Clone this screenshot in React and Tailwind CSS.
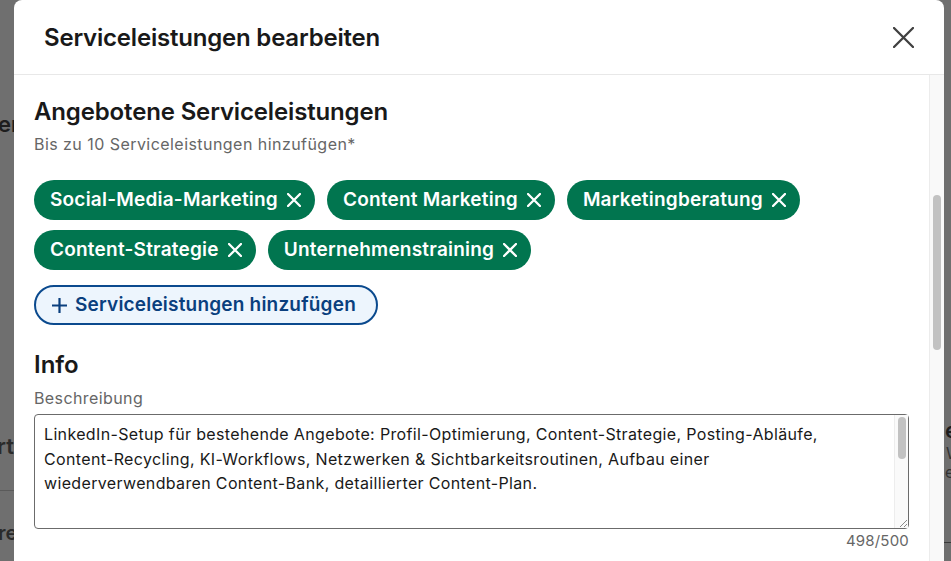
const services = [
  "Social-Media-Marketing",
  "Content Marketing",
  "Marketingberatung",
  "Content-Strategie",
  "Unternehmenstraining",
];

const beschreibung = [
  "LinkedIn-Setup für bestehende Angebote: Profil-Optimierung, Content-Strategie, Posting-Abläufe,",
  "Content-Recycling, KI-Workflows, Netzwerken & Sichtbarkeitsroutinen, Aufbau einer",
  "wiederverwendbaren Content-Bank, detaillierter Content-Plan.",
];

function Cross({ size, stroke, color }) {
  return (
    <svg width={size} height={size} viewBox={`0 0 ${size} ${size}`} fill="none">
      <path
        d={`M1 1 L${size - 1} ${size - 1} M${size - 1} 1 L1 ${size - 1}`}
        stroke={color}
        strokeWidth={stroke}
        strokeLinecap="round"
      />
    </svg>
  );
}

function ServicePill({ label }) {
  return (
    <button className="flex h-10 items-center gap-[9px] rounded-full bg-[#01754f] pl-[16px] pr-[14px] text-[19px] font-semibold tracking-[0.22px] text-white">
      <span>{label}</span>
      <Cross size={14} stroke={2.3} color="#ffffff" />
    </button>
  );
}

function PageBehind() {
  // dimmed page behind the modal, only its edges peek out
  return (
    <div className="flex h-[561px] w-full justify-between overflow-hidden bg-[#6f6f6f] text-[#1d1d1d]">
      <div className="flex w-[14px] flex-col overflow-hidden">
        <div className="mt-[110px] -ml-[2px] text-[22px] font-semibold leading-[28px]">er</div>
        <div className="mt-[294px] -ml-[3px] text-[22px] font-semibold leading-[28px] text-[#2a2a2a]">rt</div>
        <div className="mt-[30px] border-t border-[#5a5a5a]" />
        <div className="mt-[30px] -ml-[2px] text-[20px] font-semibold leading-[24px] text-[#2a2a2a]">re</div>
      </div>
      <div className="flex w-[7px] flex-col overflow-hidden">
        <div className="mt-[416px] ml-[1px] text-[22px] font-semibold leading-[28px]">el</div>
        <div className="ml-[2px] text-[16px] leading-[18px] text-[#333]">W</div>
        <div className="ml-[1px] text-[16px] leading-[20px] text-[#333]">e</div>
        <div className="mt-[60px] border-t border-[#3a3a3a]" />
      </div>
    </div>
  );
}

export default function App() {
  return (
    <div
      className="relative h-[561px] w-[951px] overflow-hidden"
      style={{ fontFamily: "Inter, 'Liberation Sans', sans-serif" }}
    >
      <PageBehind />

      <div className="absolute left-[14px] top-0 flex h-[600px] w-[930px] flex-col rounded-t-[8px] bg-white">
        <div className="flex h-[75px] shrink-0 items-center justify-between border-b border-[#e8e8e8] pl-[30px] pr-[30px]">
          <h2 className="mt-[2px] text-[24px] font-semibold tracking-[-0.2px] text-[#191919]">
            Serviceleistungen bearbeiten
          </h2>
          <Cross size={21} stroke={2.3} color="#404040" />
        </div>

        <div className="flex flex-1">
          <div className="flex-1 px-[20px] pt-[22px]">
            <h3 className="text-[24px] font-semibold leading-[30px] tracking-[-0.15px] text-[#191919]">
              Angebotene Serviceleistungen
            </h3>
            <p className="mt-[7px] text-[16px] leading-[20px] tracking-[0.45px] text-[#666666]">
              Bis zu 10 Serviceleistungen hinzufügen*
            </p>

            <div className="mt-[26px] flex flex-wrap gap-x-[12px] gap-y-[10px]">
              {services.map((s) => (
                <ServicePill key={s} label={s} />
              ))}
            </div>

            <button className="mt-[15px] flex h-10 items-center gap-[8px] rounded-full border-2 border-[#0b4a8e] bg-[#edf5fd] pl-[16px] pr-[20px] text-[19px] font-semibold tracking-[0.2px] text-[#0a3f7e]">
              <svg width="15" height="15" viewBox="0 0 15 15" fill="none">
                <path d="M7.5 0.5 V14.5 M0.5 7.5 H14.5" stroke="#0a3f7e" strokeWidth="2.2" strokeLinecap="round" />
              </svg>
              <span>Serviceleistungen hinzufügen</span>
            </button>

            <h3 className="mt-[25px] text-[24px] font-semibold leading-[30px] text-[#191919]">
              Info
            </h3>
            <div className="mt-[8px] text-[16px] leading-[20px] tracking-[0.4px] text-[#666666]">Beschreibung</div>

            <div className="mt-[6px] flex h-[115px] rounded-[4px] border border-[#6b6b6b]">
              <div className="flex-1 pl-[9px] pt-[7px] text-[16px] leading-[24.5px] tracking-[0.35px] text-[#191919]">
                {beschreibung.map((line) => (
                  <div key={line}>{line}</div>
                ))}
              </div>
              <div className="flex w-[14px] flex-col border-l border-[#ededed] bg-[#fafafa]">
                <div className="mx-auto mt-[2px] h-[42px] w-[8px] rounded-full bg-[#c2c2c2]" />
                <div className="flex-1" />
                <svg width="13" height="13" viewBox="0 0 13 13" className="ml-auto">
                  <path d="M12 5 L5 12 M12 9 L9 12" stroke="#8a8a8a" strokeWidth="1" />
                </svg>
              </div>
            </div>
            <div className="mt-[2px] text-right text-[15px] leading-[20px] tracking-[0.2px] text-[#666666]">498/500</div>
          </div>

          <div className="w-[15px] border-l border-[#ececec] bg-[#f9f9f9]">
            <div className="mx-auto mt-[120px] h-[155px] w-[8px] rounded-full bg-[#c2c2c2]" />
          </div>
        </div>
      </div>
    </div>
  );
}
